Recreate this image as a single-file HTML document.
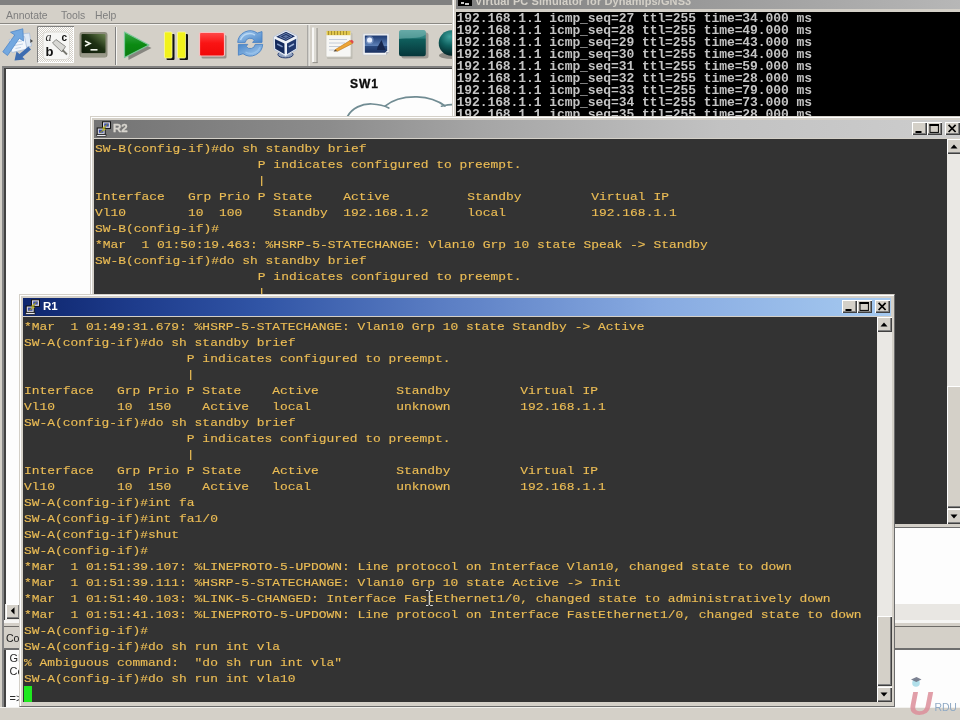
<!DOCTYPE html>
<html lang="en">
<head>
<meta charset="utf-8">
<title>GNS3 HSRP lab</title>
<style>
*{box-sizing:border-box;margin:0;padding:0}
html,body{width:960px;height:720px;overflow:hidden;background:#d4d0c8}
body{position:relative;font-family:"Liberation Sans",sans-serif;font-size:11px;color:#000}
.abs{position:absolute}
/* ---------- GNS3 main window ---------- */
#gtitle{left:0;top:0;width:452px;height:5px;background:#808080}
#menubar{left:0;top:5px;width:452px;height:18px;background:#d4d0c8}
#menubar span{position:absolute;top:5px;font-size:10.4px;color:#7e7e7e}
#mline1{left:0;top:23px;width:452px;height:1px;background:#8a8883}
#mline2{left:0;top:24px;width:452px;height:1px;background:#f4f3f0}
#toolbar{left:0;top:25px;width:452px;height:41px;background:#d4d0c8}
#canvas{left:2px;top:66px;width:960px;height:554px;background:#fdfdfd;border-left:2px solid #858585;border-top:2px solid #808080;box-shadow:inset 2px 1px 0 #424242}
/* ---------- terminal shared ---------- */
.term{background:#333333;color:#ecbd55;-webkit-text-stroke:0.15px #ecbd55;font-family:"Liberation Mono",monospace;font-size:12.4px;letter-spacing:0.32px;line-height:16px;white-space:pre;overflow:hidden}
.tx{transform:scaleX(1.0955);transform-origin:0 0;line-height:16px;font-size:11.8px;letter-spacing:0}
.win{background:#d4d0c8;border:1px solid;border-color:#d4d0c8 #6c6c6c #6c6c6c #d4d0c8;box-shadow:inset 1px 1px 0 #fff}
.tbtn{position:absolute;width:15px;height:13px;background:#d4d0c8;box-shadow:inset 1px 1px 0 #fff,inset -1px -1px 0 #404040,inset -2px -2px 0 #808080}
.sbtn{position:absolute;left:0;width:15px;height:15px;background:#d4d0c8;box-shadow:inset 1px 1px 0 #fff,inset -1px -1px 0 #404040,inset -2px -2px 0 #808080}
.track{background:#eae8e4}
.thumb{position:absolute;left:0;width:15px;background:#d4d0c8;box-shadow:inset 1px 1px 0 #fff,inset -1px -1px 0 #404040,inset -2px -2px 0 #808080}

/* ---------- VPCS ---------- */
#vpcs{left:452px;top:-14px;width:520px;height:130px;background:#d4d0c8;border-left:1px solid #d4d0c8;box-shadow:inset 1px 0 0 #fff}
#vtitle{left:3px;top:14px;width:520px;height:9px;background:linear-gradient(90deg,#808080 0,#828282 40px,#b7b7b7 505px);overflow:hidden}
#vtitle b{position:absolute;left:19px;top:-5.5px;font-size:11px;line-height:12px;color:#d4d0c8;white-space:nowrap;letter-spacing:0.1px}
#vicon{left:2px;top:-7px;width:14px;height:13px;background:#000}
#vcon{left:3px;top:25.5px;width:520px;height:104.5px;background:#000;color:#c4c4c4;font-family:"Liberation Mono",monospace;font-weight:bold;font-size:13px;letter-spacing:-0.075px;line-height:12px;white-space:pre;overflow:hidden;padding:1px 0 0 0.5px}
/* ---------- R2 ---------- */
#r2{left:90px;top:116px;width:877px;height:412px}
#r2 .title{left:3px;top:3px;width:870px;height:18px;background:linear-gradient(90deg,#747474 0%,#8c8c8c 27%,#a6a6a6 45%,#c2c2c2 72%,#cdcdcd 100%)}
#r2 .title b{position:absolute;left:19px;top:2px;font-size:11.5px;color:#d8d5ce;-webkit-text-stroke:0.3px #d8d5ce}
#r2 .term{left:3px;top:22px;width:853px;height:385px;padding:2px 0 0 1px}
#r2 .sb{left:856px;top:22px;width:15px;height:385px}
/* ---------- R1 ---------- */
#r1{left:19px;top:294px;width:876px;height:413px}
#r1 .title{left:3px;top:3px;width:868px;height:18px;background:linear-gradient(90deg,#0e266e 0%,#1e3c8c 13%,#3054a5 27%,#5a7dc3 48%,#87aae1 73%,#a6caf0 100%)}
#r1 .title b{position:absolute;left:20px;top:2px;font-size:11.5px;color:#fff}
#r1 .term{left:3px;top:22px;width:854px;height:385px;padding:2px 0 0 1px}
#r1 .sb{left:857px;top:22px;width:15px;height:385px}
#cursor{left:1px;top:369px;width:8px;height:16px;background:#1fe91f}

#hscroll{left:5px;top:604px;width:955px;height:16px;background:#e9e7e3}
#hscroll .lb{position:absolute;left:1px;top:0;width:14px;height:15px;background:#d4d0c8;box-shadow:inset 1px 1px 0 #fff,inset -1px -1px 0 #404040,inset -2px -2px 0 #808080}
#cbot{left:4px;top:620px;width:956px;height:3px;background:#f6f6f4}
#dockhead{left:3px;top:626px;width:957px;height:24px;background:#d4d0c8;border-top:2px solid #6e6c68;border-bottom:2px solid #686868;border-top-width:1.5px}
#dockhead span{position:absolute;left:3px;top:4.5px;font-size:10.6px;letter-spacing:-0.25px;color:#1a1a1a}
#console{left:2px;top:648px;width:958px;height:59px;background:#fdfdfd;border-left:2px solid #858585;border-top:2px solid #6e6e6e;box-shadow:inset 2px 0 0 #424242;font-size:11px;color:#2a2a2a;line-height:13px}
#console span{position:absolute;left:5.5px}
#gbot{left:0;top:707px;width:960px;height:13px;background:#d4d0c8;border-top:1px solid #f2f1ee}

#sw1{left:350px;top:77px;font-size:12px;font-weight:bold;letter-spacing:0.9px;color:#0c0c0c;line-height:14px;-webkit-text-stroke:0.35px #0c0c0c}
.glyph{position:absolute;left:0;top:0}

#ibeam{left:425px;top:589px}
#logo{left:905px;top:672px}
#lframe{left:2px;top:620px;width:2px;height:30px;background:#858585}
body>*{will-change:transform}
</style>
</head>
<body>
<!-- GNS3 -->
<div class="abs" id="gtitle"></div>
<div class="abs" id="menubar"><span style="left:6px">Annotate</span><span style="left:61px">Tools</span><span style="left:95px">Help</span></div>
<div class="abs" id="mline1"></div><div class="abs" id="mline2"></div>
<div class="abs" id="toolbar"></div>
<svg class="abs" id="tbsvg" style="left:0;top:25px" width="452" height="42" viewBox="0 25 452 42">
<defs>
<linearGradient id="gPlay" x1="0" y1="0" x2="0" y2="1"><stop offset="0" stop-color="#3aa84a"/><stop offset="0.5" stop-color="#0b8a12"/><stop offset="1" stop-color="#0a7a10"/></linearGradient>
<linearGradient id="gStop" x1="0" y1="0" x2="0" y2="1"><stop offset="0" stop-color="#ff4a4a"/><stop offset="0.45" stop-color="#fa1414"/><stop offset="1" stop-color="#f00808"/></linearGradient>
<linearGradient id="gTeal" x1="0" y1="0" x2="0" y2="1"><stop offset="0" stop-color="#4f9c9a"/><stop offset="0.3" stop-color="#2a7e7c"/><stop offset="0.36" stop-color="#0f5e5c"/><stop offset="1" stop-color="#06363a"/></linearGradient>
<radialGradient id="gSph" cx="0.42" cy="0.25" r="0.8"><stop offset="0" stop-color="#3fa29e"/><stop offset="0.45" stop-color="#0f605e"/><stop offset="1" stop-color="#021c20"/></radialGradient>
<linearGradient id="gSky" x1="0" y1="0" x2="0" y2="1"><stop offset="0" stop-color="#1d3a72"/><stop offset="0.6" stop-color="#5f82b8"/><stop offset="0.62" stop-color="#2a4a80"/><stop offset="1" stop-color="#1a3060"/></linearGradient>
<linearGradient id="gScr" x1="0" y1="1" x2="1" y2="0"><stop offset="0" stop-color="#0a1606"/><stop offset="0.55" stop-color="#1f3214"/><stop offset="1" stop-color="#6c8450"/></linearGradient>
<linearGradient id="gBlue" x1="0" y1="0" x2="1" y2="1"><stop offset="0" stop-color="#a8cdf0"/><stop offset="1" stop-color="#4a86c8"/></linearGradient>
<pattern id="dith" width="2" height="2" patternUnits="userSpaceOnUse"><rect width="2" height="2" fill="#d4d0c8"/><rect width="1" height="1" fill="#fff"/><rect x="1" y="1" width="1" height="1" fill="#fff"/></pattern>
</defs>
<!-- icon 1: export arrows + docs -->
<g>
<path d="M14 35 L29.5 33 L31.5 46 L17 49.5 Z" fill="#dfe9f5" stroke="#a9bedb" stroke-width="0.8"/>
<path d="M9 39.5 L24.5 36.5 L27 49 L12 52.5 Z" fill="#f3f7fc" stroke="#a9bedb" stroke-width="0.8"/>
<path d="M14 42.5 L22 41 M14.5 45.5 L23 44 M15.5 48.5 L21 47.4" stroke="#c2d2e6" stroke-width="1"/>
<path d="M14.5 60.5 L16.5 51.5 L19.5 54 L28.5 46.5 L31 49.5 L22.5 57 L25 59.5 Z" fill="#3d6cb0"/>
<path d="M22.8 28.8 L23.5 41 L19.3 38.3 L7.5 55.5 L2.8 51.8 L14.8 35 L10.5 32.2 Z" fill="#73a8e0" stroke="#4f86c8" stroke-width="0.8" stroke-linejoin="round"/>
<path d="M30.3 39 L33 41 L30.3 43 Z" fill="#4a4a4a"/>
</g>
<!-- icon 2: checked toggle abc -->
<rect x="37" y="26" width="37" height="37" fill="url(#dith)"/>
<path d="M37.5 63 V26.5 H74" fill="none" stroke="#808080" stroke-width="1"/>
<path d="M37.5 62.5 H73.5 V27" fill="none" stroke="#fff" stroke-width="1"/>
<rect x="43" y="32" width="26.5" height="27.5" rx="4" fill="#f6f6f4" stroke="#dcdad4" stroke-width="1"/>
<text x="45.5" y="40.5" font-family="Liberation Serif,serif" font-style="italic" font-size="12" fill="#222">a</text>
<text x="61.5" y="40.5" font-family="Liberation Sans,sans-serif" font-weight="bold" font-size="10" fill="#111">c</text>
<text x="45.5" y="56" font-family="Liberation Sans,sans-serif" font-weight="bold" font-size="13" fill="#111">b</text>
<path d="M52.5 43 L56 39.5 L65.5 46.5 L62 52 Z" fill="#d8d8d4" stroke="#8a8a86" stroke-width="1"/>
<path d="M62.5 50 L67 54.5" stroke="#77776f" stroke-width="1.8" fill="none"/>
<!-- icon 3: terminal -->
<rect x="79.5" y="32" width="28" height="25.5" rx="3" fill="#8c8c7c"/>
<rect x="81" y="54" width="25" height="3" fill="#9a9a8a"/>
<rect x="81.5" y="34" width="24" height="19" rx="1" fill="url(#gScr)"/>
<path d="M85 41 L90 43.5 L85 46" fill="none" stroke="#f2f6ec" stroke-width="1.6"/>
<rect x="90.5" y="49" width="7" height="1.6" fill="#f2f6ec"/>
<!-- separator -->
<rect x="115" y="27" width="1" height="38" fill="#808080"/><rect x="116" y="27" width="1" height="38" fill="#f6f5f2"/>
<!-- play -->
<path d="M127 35.5 L151.5 48 L128.5 60 Z" fill="#6e6e68" opacity="0.75"/>
<path d="M124.5 32 L149 45 L124.5 57.5 Z" fill="url(#gPlay)" stroke="#7cc89a" stroke-width="1.2" stroke-linejoin="round"/>
<!-- pause -->
<rect x="166.5" y="34" width="8" height="26" rx="1" fill="#111"/><rect x="179.5" y="34" width="8.5" height="26" rx="1" fill="#111"/>
<rect x="164.5" y="32" width="7.5" height="26" rx="1" fill="#f2f21c" stroke="#fafa9a" stroke-width="0.8"/><rect x="177.5" y="32" width="8" height="26" rx="1" fill="#f2f21c" stroke="#fafa9a" stroke-width="0.8"/>
<!-- stop -->
<rect x="201.5" y="35" width="25" height="23.5" rx="1.5" fill="#7d7a74" opacity="0.7"/>
<rect x="199.5" y="32.5" width="25" height="23.5" rx="1.5" fill="url(#gStop)" stroke="#f8c0c0" stroke-width="1.2"/>
<!-- reload -->
<g fill="url(#gBlue)" stroke="#4a82c4" stroke-width="0.9" stroke-linejoin="round">
<path d="M237.7 42.4 A12.5 12.5 0 0 1 257.4 33.1 L262 31.6 L262 42.4 L252.6 42.4 L254.3 40.4 A5 5 0 0 0 245.2 42.4 Z"/>
<path d="M237.7 42.4 A12.5 12.5 0 0 1 257.4 33.1 L262 31.6 L262 42.4 L252.6 42.4 L254.3 40.4 A5 5 0 0 0 245.2 42.4 Z" transform="rotate(180 250.2 43.4)"/>
</g>
<path d="M240.5 40 A10 10 0 0 1 255 35" fill="none" stroke="#c4e0f8" stroke-width="1.6" opacity="0.8"/>
<path d="M260 47 A10 10 0 0 1 245.5 52" fill="none" stroke="#9cc6ee" stroke-width="1.4" opacity="0.7"/>
<!-- virtualbox cube -->
<ellipse cx="285.5" cy="54.5" rx="7.6" ry="3.4" fill="#8fa0be" stroke="#2a3e6e" stroke-width="1"/>
<path d="M273.5 36.8 L286 30.3 L297.3 35.8 L296.8 49.5 L285.5 56.3 L274 49.5 Z" fill="#eef2f8" stroke="#b4c0d6" stroke-width="0.8"/>
<path d="M276.2 36.8 L286 31.8 L295 36.2 L285.8 41 Z" fill="#1a3064"/>
<path d="M274.9 38.9 L284.4 43.6 L284.6 54.2 L275.2 48.7 Z" fill="#13295c"/>
<path d="M287 43.6 L296.2 38.8 L295.9 48.7 L287 54.2 Z" fill="#21396f"/>
<path d="M277.2 44 L282.6 46.8" stroke="#7f98c6" stroke-width="1.5"/><path d="M288.8 46.8 L294 44" stroke="#9db2d8" stroke-width="1.5"/>
<path d="M279.5 36.6 L286 33.4 L291.8 36.3 L285.9 39.3 Z" fill="none" stroke="#8aa2cc" stroke-width="0.9" opacity="0.8"/>
<path d="M282.6 36.5 L286 34.9 L289 36.4 L285.9 38 Z" fill="#6f88b8" opacity="0.8"/>
<!-- separator + handle -->
<rect x="307.5" y="25" width="1" height="41" fill="#808080"/><rect x="308.5" y="25" width="1" height="41" fill="#f6f5f2"/>
<rect x="312" y="27.5" width="2.2" height="35" fill="#f8f7f5"/><rect x="314.2" y="27.5" width="2.6" height="35" fill="#dedbd4"/><rect x="316.6" y="28" width="0.9" height="35" fill="#8a8882"/><rect x="312.5" y="62.2" width="5" height="0.9" fill="#8a8882"/>
<!-- notepad -->
<rect x="327" y="33" width="25.5" height="26" rx="1" fill="#b8b5ad" opacity="0.8"/>
<rect x="326" y="31" width="25" height="26" rx="1" fill="#f7f7f5" stroke="#c9c6be" stroke-width="0.8"/>
<rect x="326.5" y="31" width="24" height="4.2" fill="#e0c64e"/><path d="M328.5 31 V35 M331.5 31 V35 M334.5 31 V35 M337.5 31 V35 M340.5 31 V35 M343.5 31 V35 M346.5 31 V35" stroke="#a89030" stroke-width="1"/>
<path d="M329 39.5 H347 M329 43 H345 M329 46.5 H340 M329 50 H336" stroke="#c4ccd8" stroke-width="1"/>
<path d="M335 49.8 L350 40.5 L352.6 43.4 L337.5 51.2 Z" fill="#eea535" stroke="#b87820" stroke-width="0.6"/>
<path d="M349.5 40.8 L352 39.8 L353.8 42 L352.4 43.6 Z" fill="#e0484a"/>
<path d="M335 49.8 L337.5 51.2 L333.6 51.6 Z" fill="#4a3a28"/>
<!-- picture -->
<path d="M363 33.8 H389 V52 L386 55 H363 Z" fill="#f4f5f7" stroke="#c8cad0" stroke-width="0.8"/>
<path d="M364.8 35.6 H387.2 V50.5 L385 52.8 H364.8 Z" fill="url(#gSky)"/>
<circle cx="369.6" cy="40" r="2.6" fill="#f4f8ff"/><circle cx="369.6" cy="40" r="4" fill="#cfe0ff" opacity="0.35"/>
<path d="M377.5 47 L381.5 40 L384 46.5 L385.5 50 L377 50 Z" fill="#16264c"/>
<path d="M389 52 L386 55 L386 52 Z" fill="#b5b8c0"/>
<!-- teal rounded rect -->
<rect x="401.5" y="32.5" width="27" height="26" rx="2.5" fill="#8d8a84" opacity="0.75"/>
<rect x="399" y="30" width="26.8" height="26.2" rx="2.5" fill="url(#gTeal)"/>
<path d="M399 39 C408 37 418 40 425.8 34.5 V32.5 Q425.8 30 423.3 30 H401.5 Q399 30 399 32.5 Z" fill="#84bcb8" opacity="0.45"/>
<!-- sphere -->
<ellipse cx="452" cy="55.5" rx="13" ry="3.5" fill="#6f6d68" opacity="0.7"/>
<circle cx="451.5" cy="43" r="12.8" fill="url(#gSph)"/>
</svg>

<div class="abs" id="canvas"></div>


<div class="abs" id="sw1">SW1</div>
<svg class="abs" style="left:340px;top:90px" width="120" height="30" viewBox="340 90 120 30"><g fill="none" stroke="#718c93" stroke-width="1.7" stroke-linecap="round">
<path d="M347.5 116.5 C352 108 362 103.5 372 104 C379 104.3 385 106 388.8 108"/>
<path d="M385 106.2 C392 100 404 96.5 417 96.8 C428 97.2 438 100.5 445 106"/>
<path d="M441.5 106.2 C446 105 450 104.6 456 104.4"/>
</g></svg>
<div class="abs" id="hscroll"><div class="lb"><svg class="glyph" width="14" height="14"><path d="M8.5 3.2 L4.8 6.8 L8.5 10.4 Z" fill="#000"/></svg></div></div>
<div class="abs" id="cbot"></div>
<div class="abs" id="dockhead"><span>Console</span></div>
<div class="abs" id="console"><span style="top:2px">GNS3 management console.</span><span style="top:15px">Copyright (c) 2006-2012 GNS3 Project.</span><span style="top:41.5px">=&gt;</span></div>
<div class="abs" id="lframe"></div>
<div class="abs" id="gbot"></div>
<!-- VPCS console -->
<div class="abs" id="vpcs">
  <div class="abs" id="vtitle"><div class="abs" id="vicon"><i style="position:absolute;left:3px;top:9px;width:3px;height:2px;background:#c8c8c8"></i><i style="position:absolute;left:7px;top:10px;width:4px;height:1.5px;background:#c8c8c8"></i></div><b>Virtual PC Simulator for Dynamips/GNS3</b></div>
  <div class="abs" id="vcon">192.168.1.1 icmp_seq=27 ttl=255 time=34.000 ms
192.168.1.1 icmp_seq=28 ttl=255 time=49.000 ms
192.168.1.1 icmp_seq=29 ttl=255 time=43.000 ms
192.168.1.1 icmp_seq=30 ttl=255 time=34.000 ms
192.168.1.1 icmp_seq=31 ttl=255 time=59.000 ms
192.168.1.1 icmp_seq=32 ttl=255 time=28.000 ms
192.168.1.1 icmp_seq=33 ttl=255 time=79.000 ms
192.168.1.1 icmp_seq=34 ttl=255 time=73.000 ms
192.168.1.1 icmp_seq=35 ttl=255 time=28.000 ms</div>
</div>
<!-- R2 putty -->
<div class="abs win" id="r2">
  <div class="abs title"><svg class="abs" style="left:2px;top:1px" width="16" height="16" viewBox="0 0 16 16">
<rect x="6.5" y="0.8" width="8" height="6.6" fill="#d8d8e0" stroke="#111" stroke-width="1"/><rect x="8.2" y="2.4" width="4.6" height="3.2" fill="#3a4ea8"/>
<rect x="1.2" y="7" width="8" height="6.4" fill="#d8d8e0" stroke="#111" stroke-width="1"/><rect x="2.9" y="8.6" width="4.6" height="3.2" fill="#3a4ea8"/>
<rect x="0.8" y="13.6" width="9.2" height="1.8" fill="#e8e8ee" stroke="#111" stroke-width="0.6"/>
<path d="M11.6 3 L6.2 7.2 L8.2 7.8 L4 11.6 L9.8 8.2 L7.8 7.4 Z" fill="#f6ee30" stroke="#8a8410" stroke-width="0.5"/>
</svg><b>R2</b>
    <div class="tbtn" style="left:818px;top:2px"><svg class="glyph" width="15" height="13"><rect x="3.5" y="9" width="6" height="2" fill="#000"/></svg></div><div class="tbtn" style="left:833px;top:2px"><svg class="glyph" width="15" height="13"><rect x="3" y="2.6" width="8.4" height="7.8" fill="none" stroke="#000" stroke-width="1"/><rect x="2.5" y="2" width="9.4" height="2" fill="#000"/></svg></div><div class="tbtn" style="left:851px;top:2px"><svg class="glyph" width="15" height="13"><path d="M3.6 2.8 L10.6 10 M10.6 2.8 L3.6 10" stroke="#000" stroke-width="1.7"/></svg></div>
  </div>
  <div class="abs term"><div class="tx">SW-B(config-if)#do sh standby brief
                     P indicates configured to preempt.
                     |
Interface   Grp Prio P State    Active          Standby         Virtual IP
Vl10        10  100    Standby  192.168.1.2     local           192.168.1.1
SW-B(config-if)#
*Mar  1 01:50:19.463: %HSRP-5-STATECHANGE: Vlan10 Grp 10 state Speak -&gt; Standby
SW-B(config-if)#do sh standby brief
                     P indicates configured to preempt.
                     |</div></div>
  <div class="abs sb track"><div class="sbtn" style="top:0"><svg class="glyph" width="15" height="15"><path d="M3.5 9.5 L7 5.5 L10.5 9.5 Z" fill="#000"/></svg></div><div class="thumb" style="top:247px;height:122px"></div><div class="sbtn" style="top:370px"><svg class="glyph" width="15" height="15"><path d="M3.5 5.5 L7 9.5 L10.5 5.5 Z" fill="#000"/></svg></div></div>
</div>
<!-- R1 putty -->
<div class="abs win" id="r1">
  <div class="abs title"><svg class="abs" style="left:2px;top:1px" width="16" height="16" viewBox="0 0 16 16">
<rect x="6.5" y="0.8" width="8" height="6.6" fill="#d8d8e0" stroke="#111" stroke-width="1"/><rect x="8.2" y="2.4" width="4.6" height="3.2" fill="#3a4ea8"/>
<rect x="1.2" y="7" width="8" height="6.4" fill="#d8d8e0" stroke="#111" stroke-width="1"/><rect x="2.9" y="8.6" width="4.6" height="3.2" fill="#3a4ea8"/>
<rect x="0.8" y="13.6" width="9.2" height="1.8" fill="#e8e8ee" stroke="#111" stroke-width="0.6"/>
<path d="M11.6 3 L6.2 7.2 L8.2 7.8 L4 11.6 L9.8 8.2 L7.8 7.4 Z" fill="#f6ee30" stroke="#8a8410" stroke-width="0.5"/>
</svg><b>R1</b>
    <div class="tbtn" style="left:819px;top:2px"><svg class="glyph" width="15" height="13"><rect x="3.5" y="9" width="6" height="2" fill="#000"/></svg></div><div class="tbtn" style="left:834px;top:2px"><svg class="glyph" width="15" height="13"><rect x="3" y="2.6" width="8.4" height="7.8" fill="none" stroke="#000" stroke-width="1"/><rect x="2.5" y="2" width="9.4" height="2" fill="#000"/></svg></div><div class="tbtn" style="left:852px;top:2px"><svg class="glyph" width="15" height="13"><path d="M3.6 2.8 L10.6 10 M10.6 2.8 L3.6 10" stroke="#000" stroke-width="1.7"/></svg></div>
  </div>
  <div class="abs term"><div class="tx">*Mar  1 01:49:31.679: %HSRP-5-STATECHANGE: Vlan10 Grp 10 state Standby -&gt; Active
SW-A(config-if)#do sh standby brief
                     P indicates configured to preempt.
                     |
Interface   Grp Prio P State    Active          Standby         Virtual IP
Vl10        10  150    Active   local           unknown         192.168.1.1
SW-A(config-if)#do sh standby brief
                     P indicates configured to preempt.
                     |
Interface   Grp Prio P State    Active          Standby         Virtual IP
Vl10        10  150    Active   local           unknown         192.168.1.1
SW-A(config-if)#int fa
SW-A(config-if)#int fa1/0
SW-A(config-if)#shut
SW-A(config-if)#
*Mar  1 01:51:39.107: %LINEPROTO-5-UPDOWN: Line protocol on Interface Vlan10, changed state to down
*Mar  1 01:51:39.111: %HSRP-5-STATECHANGE: Vlan10 Grp 10 state Active -&gt; Init
*Mar  1 01:51:40.103: %LINK-5-CHANGED: Interface FastEthernet1/0, changed state to administratively down
*Mar  1 01:51:41.103: %LINEPROTO-5-UPDOWN: Line protocol on Interface FastEthernet1/0, changed state to down
SW-A(config-if)#
SW-A(config-if)#do sh run int vla
% Ambiguous command:  "do sh run int vla"
SW-A(config-if)#do sh run int vla10</div><div class="abs" id="cursor"></div></div>
  <div class="abs sb track"><div class="sbtn" style="top:0"><svg class="glyph" width="15" height="15"><path d="M3.5 9.5 L7 5.5 L10.5 9.5 Z" fill="#000"/></svg></div><div class="thumb" style="top:299px;height:70px"></div><div class="sbtn" style="top:370px"><svg class="glyph" width="15" height="15"><path d="M3.5 5.5 L7 9.5 L10.5 5.5 Z" fill="#000"/></svg></div></div>
</div>

<!-- mouse I-beam -->
<svg class="abs" id="ibeam" width="9" height="18" viewBox="0 0 9 18"><path d="M1 1.5 H3.4 M5.2 1.5 H7.8 M4.3 2 V16 M1 16.5 H3.4 M5.2 16.5 H7.8" stroke="#e4e4e4" stroke-width="1.1" fill="none"/></svg>
<!-- watermark logo -->
<svg class="abs" id="logo" width="55" height="48" viewBox="905 672 55 48">
<circle cx="916" cy="683" r="3.8" fill="#a9dbe8" opacity="0.9"/>
<path d="M911 679.5 L916.5 677 L921.5 679.6 L916.3 682 Z" fill="#6f7486" opacity="0.9"/>
<text x="908.5" y="714.5" font-family="Liberation Sans,sans-serif" font-style="italic" font-weight="bold" font-size="34" fill="#dc8f9a" opacity="0.85" textLength="24" lengthAdjust="spacingAndGlyphs">U</text>
<text x="934.5" y="711" font-family="Liberation Sans,sans-serif" font-size="10.5" fill="#8fa9c4" letter-spacing="-0.2">RDU</text>
</svg>
</body>
</html>
